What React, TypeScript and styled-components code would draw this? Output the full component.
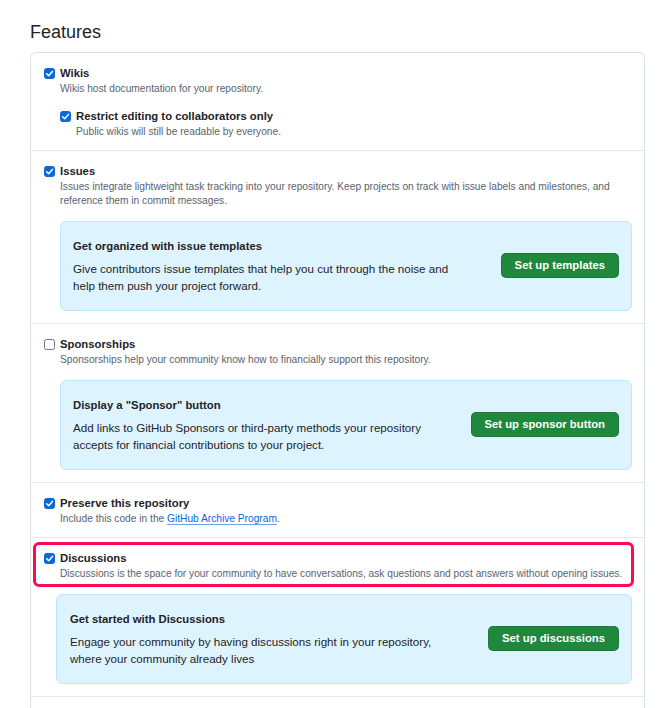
import React from "react";
import styled, { createGlobalStyle } from "styled-components";

const GlobalStyle = createGlobalStyle`
  html, body {
    margin: 0;
    padding: 0;
    background: #ffffff;
  }
  body {
    font-family: "Liberation Sans", Arial, sans-serif;
    color: #1f2328;
  }
  * { box-sizing: border-box; }
`;

const Page = styled.div`
  padding: 20px 12px 0 30px;
  height: 708px;
  overflow: hidden;
`;

const Heading = styled.h2`
  margin: 0 0 8px;
  font-size: 18px;
  line-height: 24px;
  font-weight: 400;
  color: #1f2328;
`;

const Panel = styled.div`
  width: 615px;
  border: 1px solid #dde2e7;
  border-radius: 6px;
`;

const Row = styled.div<{ $tail?: boolean }>`
  padding: 11px 12px 11px 13px;
  min-height: ${(p) => (p.$tail ? "60px" : "0")};
  & + & {
    border-top: 1px solid #e5e9ed;
  }
`;

const Item = styled.div<{ $nested?: boolean }>`
  position: relative;
  display: flex;
  align-items: flex-start;
  gap: 5px;
  margin-left: ${(p) => (p.$nested ? "16px" : "0")};
  margin-top: ${(p) => (p.$nested ? "11px" : "0")};
`;

const Highlight = styled.span`
  position: absolute;
  top: -7px;
  bottom: -6px;
  left: -11px;
  right: -2px;
  border: 3px solid #fb0a56;
  border-radius: 6px;
  pointer-events: none;
`;

const Box = styled.span<{ $checked: boolean }>`
  flex: none;
  width: 11px;
  height: 11px;
  margin-top: 4px;
  border-radius: 2.5px;
  display: flex;
  align-items: center;
  justify-content: center;
  background: ${(p) => (p.$checked ? "#0969da" : "#ffffff")};
  border: 1px solid ${(p) => (p.$checked ? "#0969da" : "#6e7781")};
`;

const ItemBody = styled.div`
  display: flex;
  flex-direction: column;
`;

const Label = styled.div`
  font-size: 11.3px;
  line-height: 18px;
  font-weight: 700;
  color: #1f2328;
`;

const Note = styled.div`
  font-size: 10.2px;
  line-height: 14px;
  color: #59636e;
`;

const Link = styled.a`
  color: #0969da;
  text-decoration: underline;
  text-decoration-color: rgba(9, 105, 218, 0.6);
  text-underline-offset: 2px;
  text-decoration-thickness: 1px;
`;

const Promo = styled.div<{ $wide?: boolean }>`
  display: flex;
  align-items: center;
  justify-content: space-between;
  margin: 13px 0 1px ${(p) => (p.$wide ? "12px" : "16px")};
  padding: 15px 12px 16px ${(p) => (p.$wide ? "13px" : "12px")};
  background: #ddf4ff;
  border: 1px solid #bfe6fd;
  border-radius: 6px;
`;

const PromoText = styled.div`
  display: flex;
  flex-direction: column;
  gap: 5px;
`;

const PromoTitle = styled.div`
  font-size: 11.3px;
  line-height: 18px;
  font-weight: 700;
  color: #1f2328;
`;

const PromoBody = styled.div`
  font-size: 11.6px;
  line-height: 17px;
  color: #1f2328;
`;

const GreenButton = styled.button`
  flex: none;
  height: 25px;
  padding: 0 13px;
  border: 1px solid rgba(31, 35, 40, 0.15);
  border-radius: 5px;
  background: #1f883d;
  color: #ffffff;
  font-family: "Liberation Sans", Arial, sans-serif;
  font-size: 11.3px;
  font-weight: 700;
  line-height: 23px;
  cursor: pointer;
`;

function Check({ checked }: { checked: boolean }) {
  return (
    <Box $checked={checked}>
      {checked && (
        <svg width="9" height="9" viewBox="0 0 12 12" fill="none">
          <path
            d="M2.2 6.3 L4.9 8.9 L9.9 3.2"
            stroke="#ffffff"
            strokeWidth="2"
            strokeLinecap="round"
            strokeLinejoin="round"
          />
        </svg>
      )}
    </Box>
  );
}

function Option({
  checked,
  label,
  note,
  nested,
  highlight,
}: {
  checked: boolean;
  label: string;
  note: React.ReactNode;
  nested?: boolean;
  highlight?: boolean;
}) {
  return (
    <Item $nested={nested}>
      {highlight && <Highlight />}
      <Check checked={checked} />
      <ItemBody>
        <Label>{label}</Label>
        <Note>{note}</Note>
      </ItemBody>
    </Item>
  );
}

function PromoCard({
  title,
  lines,
  action,
  wide,
}: {
  title: string;
  lines: [string, string];
  action: string;
  wide?: boolean;
}) {
  return (
    <Promo $wide={wide}>
      <PromoText>
        <PromoTitle>{title}</PromoTitle>
        <PromoBody>
          {lines[0]}
          <br />
          {lines[1]}
        </PromoBody>
      </PromoText>
      <GreenButton type="button">{action}</GreenButton>
    </Promo>
  );
}

export default function App() {
  return (
    <>
      <GlobalStyle />
      <Page>
        <Heading>Features</Heading>
        <Panel>
          <Row>
            <Option checked label="Wikis" note="Wikis host documentation for your repository." />
            <Option
              nested
              checked
              label="Restrict editing to collaborators only"
              note="Public wikis will still be readable by everyone."
            />
          </Row>
          <Row>
            <Option
              checked
              label="Issues"
              note="Issues integrate lightweight task tracking into your repository. Keep projects on track with issue labels and milestones, and reference them in commit messages."
            />
            <PromoCard
              title="Get organized with issue templates"
              lines={[
                "Give contributors issue templates that help you cut through the noise and",
                "help them push your project forward.",
              ]}
              action="Set up templates"
            />
          </Row>
          <Row>
            <Option
              checked={false}
              label="Sponsorships"
              note="Sponsorships help your community know how to financially support this repository."
            />
            <PromoCard
              title={'Display a "Sponsor" button'}
              lines={[
                "Add links to GitHub Sponsors or third-party methods your repository",
                "accepts for financial contributions to your project.",
              ]}
              action="Set up sponsor button"
            />
          </Row>
          <Row>
            <Option
              checked
              label="Preserve this repository"
              note={
                <>
                  Include this code in the <Link href="#">GitHub Archive Program</Link>.
                </>
              }
            />
          </Row>
          <Row>
            <Option
              checked
              highlight
              label="Discussions"
              note="Discussions is the space for your community to have conversations, ask questions and post answers without opening issues."
            />
            <PromoCard
              wide
              title="Get started with Discussions"
              lines={[
                "Engage your community by having discussions right in your repository,",
                "where your community already lives",
              ]}
              action="Set up discussions"
            />
          </Row>
          <Row $tail />
        </Panel>
      </Page>
    </>
  );
}
